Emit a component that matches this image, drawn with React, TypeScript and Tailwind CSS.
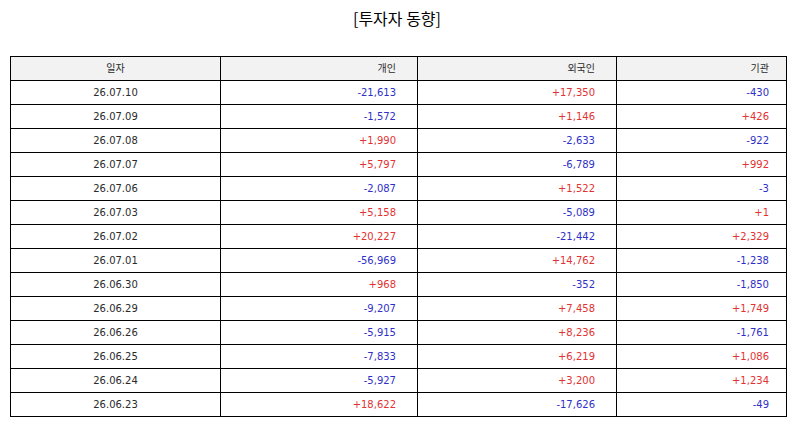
const ROWS: [string, string, string, string][] = [
  ['26.07.10', '-21,613', '+17,350', '-430'],
  ['26.07.09', '-1,572', '+1,146', '+426'],
  ['26.07.08', '+1,990', '-2,633', '-922'],
  ['26.07.07', '+5,797', '-6,789', '+992'],
  ['26.07.06', '-2,087', '+1,522', '-3'],
  ['26.07.03', '+5,158', '-5,089', '+1'],
  ['26.07.02', '+20,227', '-21,442', '+2,329'],
  ['26.07.01', '-56,969', '+14,762', '-1,238'],
  ['26.06.30', '+968', '-352', '-1,850'],
  ['26.06.29', '-9,207', '+7,458', '+1,749'],
  ['26.06.26', '-5,915', '+8,236', '-1,761'],
  ['26.06.25', '-7,833', '+6,219', '+1,086'],
  ['26.06.24', '-5,927', '+3,200', '+1,234'],
  ['26.06.23', '+18,622', '-17,626', '-49'],
]

const PADS = ['pr-[21px]', 'pr-[21px]', 'pr-[17px]']

function tone(v: string) {
  return v.startsWith('+') ? 'text-[#e23232]' : 'text-[#3030c8]'
}

export default function App() {
  return (
    <div className="w-[794px] h-[425px] bg-white text-[#2a2a2a]">
      <h1
        className="pt-[8px] mb-[28px] text-center text-[16px] leading-[20px] font-normal text-black"
        style={{ fontFamily: '"Noto Sans CJK KR", "Noto Sans", sans-serif' }}
      >
        [투자자 동향]
      </h1>
      <table
        className="ml-[10px] w-[776px] table-fixed border-collapse text-[10px]"
        style={{ fontFamily: '"DejaVu Sans", "Noto Sans CJK KR", sans-serif' }}
      >
        <colgroup>
          <col className="w-[210px]" />
          <col className="w-[197px]" />
          <col className="w-[199px]" />
          <col className="w-[170px]" />
        </colgroup>
        <thead>
          <tr className="h-[24px] bg-[#f2f2f2]">
            <th className="border border-black p-0 text-center font-normal">일자</th>
            <th className={`border border-black p-0 text-right font-normal ${PADS[0]}`}>개인</th>
            <th className={`border border-black p-0 text-right font-normal ${PADS[1]}`}>외국인</th>
            <th className={`border border-black p-0 text-right font-normal ${PADS[2]}`}>기관</th>
          </tr>
        </thead>
        <tbody>
          {ROWS.map(([date, ...vals]) => (
            <tr key={date} className="h-[24px]">
              <td className="border border-black p-0 text-center">{date}</td>
              {vals.map((v, i) => (
                <td key={i} className={`border border-black p-0 text-right ${PADS[i]} ${tone(v)}`}>
                  {v}
                </td>
              ))}
            </tr>
          ))}
        </tbody>
      </table>
    </div>
  )
}
